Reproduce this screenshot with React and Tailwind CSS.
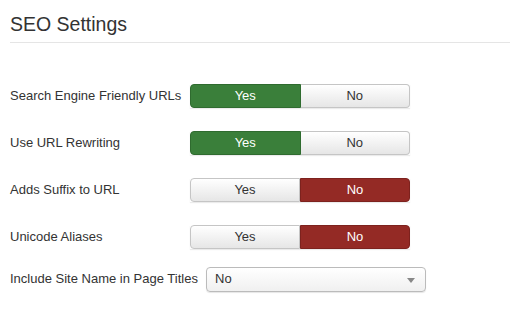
import React from "react";

const rows = [
  { label: "Search Engine Friendly URLs", value: "yes" },
  { label: "Use URL Rewriting", value: "yes" },
  { label: "Adds Suffix to URL", value: "no" },
  { label: "Unicode Aliases", value: "no" },
];

const plain =
  "bg-gradient-to-b from-[#ffffff] to-[#e6e6e6] text-[#333] border border-[#c5c5c5]";

const Toggle = ({ value }) => {
  const yes = value === "yes";
  return (
    <div className="flex h-6 w-[220px] text-[13px] shadow-[0_1px_1px_rgba(0,0,0,0.08)]">
      <div
        className={
          "flex-1 flex items-center justify-center rounded-l-[4px] " +
          (yes
            ? "bg-[#3a7f3a] text-white border border-[#2f6b2f]"
            : plain)
        }
      >
        Yes
      </div>
      <div
        className={
          "flex-1 flex items-center justify-center rounded-r-[4px] " +
          (!yes
            ? "bg-[#942a25] text-white border border-[#7d221e]"
            : plain + " border-l-0")
        }
      >
        No
      </div>
    </div>
  );
};

export default function App() {
  return (
    <div
      className="w-[510px] h-[313px] bg-white text-[#333]"
      style={{ fontFamily: '"Liberation Sans", Arial, sans-serif' }}
    >
      <div className="pl-[10px] pt-[10px]">
        <h2 className="text-[19.5px] leading-[28px]">SEO Settings</h2>
      </div>
      <div className="ml-[10px] mt-[4px] border-b border-[#e5e5e5]" />

      <div className="pl-[10px] pt-[41px] flex flex-col gap-[23px]">
        {rows.map((r) => (
          <div key={r.label} className="flex items-center h-6">
            <div className="w-[180px] text-[13px]">{r.label}</div>
            <Toggle value={r.value} />
          </div>
        ))}
        <div className="flex items-center h-6 -mt-[5px]">
          <div className="w-[196px] text-[13px]">
            Include Site Name in Page Titles
          </div>
          <div className="relative w-[220px] h-[25px] rounded-[4px] border border-[#bbb] bg-gradient-to-b from-[#ffffff] to-[#f0f0f0] shadow-[0_1px_1px_rgba(0,0,0,0.1)] flex items-center pl-[8px] text-[13px]">
            No
            <svg
              className="absolute right-[10px] top-[10px]"
              width="8"
              height="5"
              viewBox="0 0 8 5"
            >
              <path d="M0 0 L8 0 L4 5 Z" fill="#888" />
            </svg>
          </div>
        </div>
      </div>
    </div>
  );
}
